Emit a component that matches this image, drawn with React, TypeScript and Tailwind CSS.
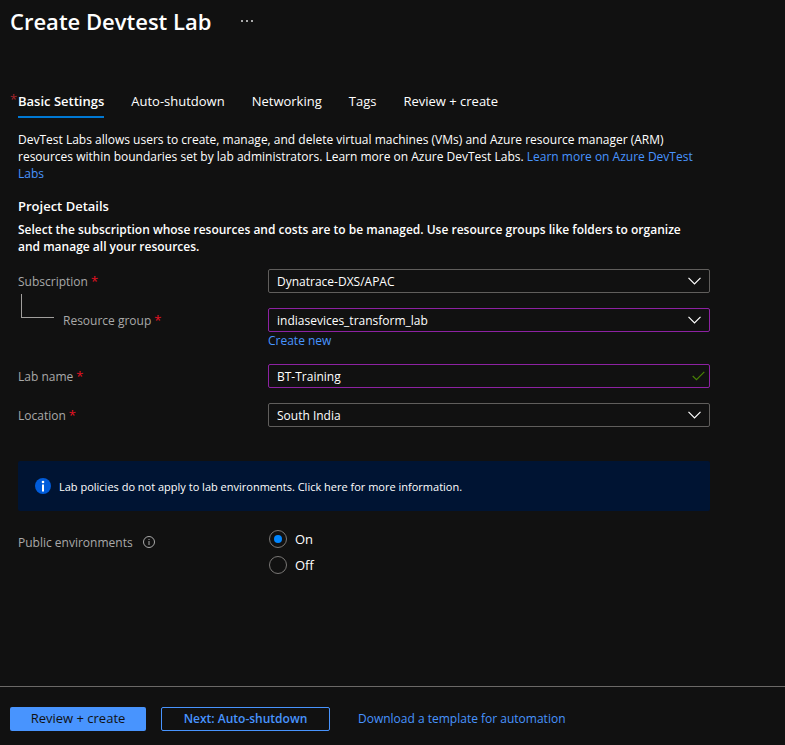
import { useState, type ReactNode } from "react";

const tabs = ["Basic Settings", "Auto-shutdown", "Networking", "Tags", "Review + create"];

function Required() {
  return <span className="ml-[3px] text-[13px] text-[#e81123]" aria-hidden="true">*</span>;
}

function Chevron() {
  return (
    <svg className="pointer-events-none absolute right-[9px] top-2 h-2 w-[13px]" viewBox="0 0 13 8" fill="none" stroke="#ffffff" strokeWidth="1.2" aria-hidden="true">
      <path d="M0.5 0.9 6.5 6.9l6-6" />
    </svg>
  );
}

function Field({ id, label, nested, children }: { id: string; label: string; nested?: boolean; children: ReactNode }) {
  return (
    <div className="flex items-start">
      <div className="relative flex h-6 w-[250px] shrink-0 items-center text-[#a9a9a9]">
        {nested && <span className="absolute -top-[14px] left-[3px] h-6 w-[33px] border-b border-l border-[#a19f9d]" />}
        <label htmlFor={id} className={nested ? "pl-[45px]" : ""}>
          {label}
          <Required />
        </label>
      </div>
      <div className="min-w-0 flex-1">{children}</div>
    </div>
  );
}

function Select({ id, value, edited }: { id: string; value: string; edited?: boolean }) {
  return (
    <div className="relative">
      <select
        id={id}
        className={`block h-6 w-full appearance-none rounded-[2px] border bg-[#111111] pl-2 pr-8 text-white ${edited ? "border-[#8d22a2]" : "border-[#605e5c]"}`}
      >
        <option>{value}</option>
      </select>
      <Chevron />
    </div>
  );
}

export default function App() {
  const [active, setActive] = useState(tabs[0]);
  const [publicEnv, setPublicEnv] = useState("On");
  const [labName, setLabName] = useState("BT-Training");

  return (
    <div className="flex min-h-screen flex-col bg-[#111111] font-['Open_Sans','Noto_Sans',sans-serif] text-[12px] leading-[17px] text-white">
      <header className="flex h-[42px] items-center gap-[30px] pl-[10px]">
        <h1 className="text-[22px] font-semibold leading-8">Create Devtest Lab</h1>
        <button type="button" aria-label="More options" className="flex gap-[3px]">
          <span className="size-[2px] bg-[#a9a9a9]" />
          <span className="size-[2px] bg-[#a9a9a9]" />
          <span className="size-[2px] bg-[#a9a9a9]" />
        </button>
      </header>

      <main className="max-w-[710px] flex-1 pl-[18px]">
        <nav className="relative mt-12 flex gap-[27px] text-[13px]" role="tablist">
          <span className="absolute -left-2 top-px text-[#a4262c]">*</span>
          {tabs.map((tab) => (
            <button
              key={tab}
              type="button"
              role="tab"
              aria-selected={active === tab}
              onClick={() => setActive(tab)}
              className={`h-7 whitespace-nowrap border-b-2 pb-1 ${active === tab ? "border-[#0078d4] font-semibold" : "border-transparent"}`}
            >
              {tab}
            </button>
          ))}
        </nav>

        <p className="mt-[13px]">
          DevTest Labs allows users to create, manage, and delete virtual machines (VMs) and Azure resource manager (ARM)
          resources within boundaries set by lab administrators. Learn more on Azure DevTest Labs.{" "}
          <a href="#learn" className="text-[#4894fe]">Learn more on Azure DevTest Labs</a>
        </p>

        <h2 className="mt-4 text-[13px] font-semibold">Project Details</h2>
        <p className="mt-[6px] pr-2 font-semibold">
          Select the subscription whose resources and costs are to be managed. Use resource groups like folders to organize
          and manage all your resources.
        </p>

        <form className="mt-[14px] flex flex-col gap-[15px]">
          <Field id="subscription" label="Subscription">
            <Select id="subscription" value="Dynatrace-DXS/APAC" />
          </Field>
          <Field id="group" label="Resource group" nested>
            <Select id="group" value="indiasevices_transform_lab" edited />
            <a href="#new" className="block w-fit pt-px leading-4 text-[#4894fe]">Create new</a>
          </Field>
          <Field id="name" label="Lab name">
            <div className="relative">
              <input
                id="name"
                type="text"
                value={labName}
                onChange={(e) => setLabName(e.target.value)}
                className="block h-6 w-full rounded-[2px] border border-[#8d22a2] bg-transparent pl-2 pr-8 text-white"
              />
              <svg className="pointer-events-none absolute right-[5px] top-[7px] h-[10px] w-[13px]" viewBox="0 0 13 10" fill="none" stroke="#498205" strokeWidth="1.2" aria-hidden="true">
                <path d="M0.7 5 4.5 8.6 12.3 0.9" />
              </svg>
            </div>
          </Field>
          <Field id="location" label="Location">
            <Select id="location" value="South India" />
          </Field>
        </form>

        <div className="mt-[34px] flex h-[50px] items-center gap-2 rounded-[2px] bg-[#001433] pl-[17px] text-[11px]">
          <svg className="size-4 shrink-0" viewBox="0 0 16 16" aria-hidden="true">
            <circle cx="8" cy="8" r="8" fill="#015cda" />
            <circle cx="8" cy="4" r="1.3" fill="#fff" />
            <rect x="7" y="6.5" width="2" height="7" fill="#fff" />
          </svg>
          <span>Lab policies do not apply to lab environments. Click here for more information.</span>
        </div>

        <fieldset className="mt-[19px] flex">
          <div className="flex h-6 w-[250px] shrink-0 items-center gap-[10px] text-[#a9a9a9]">
            <span id="environments">Public environments</span>
            <svg className="size-3" viewBox="0 0 12 12" fill="none" stroke="#a9a9a9" aria-hidden="true">
              <circle cx="6" cy="6" r="5.5" />
              <path d="M6 5v4M6 3v1" />
            </svg>
          </div>
          <div role="radiogroup" aria-labelledby="environments" className="flex flex-col gap-2">
            {["On", "Off"].map((option) => (
              <label key={option} className="flex h-[18px] items-center gap-2 pl-px text-[13px]">
                <input
                  type="radio"
                  name="environments"
                  checked={publicEnv === option}
                  onChange={() => setPublicEnv(option)}
                  className="grid size-[18px] appearance-none place-content-center rounded-full border border-[#797775] before:size-2 before:rounded-full before:content-[''] checked:before:bg-[#0086ff]"
                />
                {option}
              </label>
            ))}
          </div>
        </fieldset>
      </main>

      <footer className="flex h-[59px] items-center border-t border-[#6b6967] pl-[10px] pt-[5px]">
        <button type="button" className="h-6 w-[136px] rounded-[2px] bg-[#4894fe] text-[13px] text-[#111111]">Review + create</button>
        <button type="button" className="ml-[15px] h-6 w-[169px] rounded-[2px] border border-[#4894fe] font-semibold text-[#4894fe]">
          Next: Auto-shutdown
        </button>
        <a href="#template" className="ml-7 text-[#4894fe]">Download a template for automation</a>
      </footer>
    </div>
  );
}
